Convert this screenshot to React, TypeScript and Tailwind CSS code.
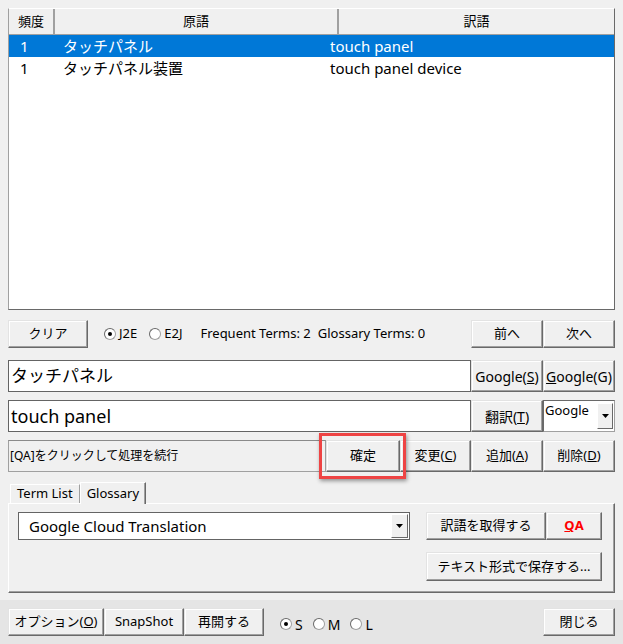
import type { ReactNode } from "react";

const font = { fontFamily: '"Noto Sans", "Noto Sans CJK JP", sans-serif' };

function Btn({
  children,
  className = "",
}: {
  children: ReactNode;
  className?: string;
}) {
  return (
    <button
      className={`flex items-center justify-center bg-[#f0f0f0] text-[13px] border border-t-[#e3e3e3] border-l-[#e3e3e3] border-b-[#696969] border-r-[#696969] shadow-[inset_-1px_-1px_0_#a0a0a0,inset_1px_1px_0_#ffffff] ${className}`}
    >
      {children}
    </button>
  );
}

function Radio({ checked, label }: { checked?: boolean; label: string }) {
  return (
    <div className="flex items-center gap-[3px]">
      <span className="w-[12px] h-[12px] rounded-full bg-white border border-[#a0a0a0] border-t-[#696969] border-l-[#696969] flex items-center justify-center">
        {checked && <span className="w-[4px] h-[4px] rounded-full bg-black" />}
      </span>
      <span>{label}</span>
    </div>
  );
}

function Arrow() {
  return (
    <svg width="7" height="4" viewBox="0 0 7 4">
      <path d="M0 0h7L3.5 4z" fill="#000" />
    </svg>
  );
}

const rows = [
  { freq: "1", src: "タッチパネル", dst: "touch panel", sel: true },
  { freq: "1", src: "タッチパネル装置", dst: "touch panel device", sel: false },
];

export default function App() {
  return (
    <div className="w-[623px] h-[644px] bg-[#f0f0f0] text-black flex flex-col overflow-hidden" style={font}>
      <div className="px-2 pt-2 flex flex-col">
        {/* term list */}
        <div className="h-[302px] bg-white border border-[#a0a0a0] border-t-white border-r-[#696969] border-b-[#696969] flex flex-col">
          <div className="flex h-[26px] text-[13px] border-b border-b-[#a0a0a0]">
            <div className="w-[46px] flex items-center justify-center bg-[#f0f0f0] border-r-2 border-r-[#a0a0a0]">頻度</div>
            <div className="w-[284px] flex items-center justify-center bg-[#f0f0f0] border-r-2 border-r-[#a0a0a0]">原語</div>
            <div className="flex-1 flex items-center justify-center bg-[#f0f0f0]">訳語</div>
          </div>
          {rows.map((r, i) => (
            <div
              key={i}
              className={`flex h-[22px] items-center text-[15px] ${r.sel ? "bg-[#0078d7] text-white" : "text-black"}`}
            >
              <div className="w-[54px] pl-[11px]">{r.freq}</div>
              <div className="w-[267px]">{r.src}</div>
              <div className="flex-1">{r.dst}</div>
            </div>
          ))}
        </div>

        {/* options row */}
        <div className="mt-[10px] flex h-[28px] items-center text-[13px]">
          <Btn className="w-[80px] h-[28px]">クリア</Btn>
          <div className="ml-[16px] flex items-center gap-[12px]">
            <Radio checked label="J2E" />
            <Radio label="E2J" />
          </div>
          <span className="ml-[18px]">Frequent Terms: 2</span>
          <span className="ml-[7px]">Glossary Terms: 0</span>
          <div className="ml-auto flex">
            <Btn className="w-[72px] h-[28px]">前へ</Btn>
            <Btn className="w-[72px] h-[28px]">次へ</Btn>
          </div>
        </div>

        {/* source */}
        <div className="mt-[12px] flex h-[32px]">
          <div className="flex-1 bg-white border border-[#646464] flex items-center pl-[2px] text-[17px]">タッチパネル</div>
          <Btn className="w-[72px] h-[32px] text-[14px]">
            Google(<u>S</u>)
          </Btn>
          <Btn className="w-[72px] h-[32px] text-[14px]">
            <u>G</u>oogle(G)
          </Btn>
        </div>

        {/* target */}
        <div className="mt-[8px] flex h-[32px]">
          <div className="flex-1 bg-white border border-[#646464] flex items-center pl-[2px] text-[18px]">touch panel</div>
          <Btn className="w-[72px] h-[32px] text-[14px]">
            翻訳(<u>T</u>)
          </Btn>
          <div className="w-[72px] h-[32px] bg-white border border-[#a0a0a0] border-t-[#696969] border-l-[#696969] flex">
            <span className="flex-1 text-[13px] leading-none pt-[3px] pl-[1px]">Google</span>
            <div className="w-[16px] my-[2px] mr-[1px] bg-[#f0f0f0] border border-t-white border-l-white border-b-[#696969] border-r-[#696969] flex items-center justify-center">
              <Arrow />
            </div>
          </div>
        </div>

        {/* status / actions */}
        <div className="mt-[8px] flex h-[32px]">
          <div className="flex-1 border border-[#a0a0a0] border-t-[#8a8a8a] flex items-center pl-[1px] text-[12px]">
            [QA]をクリックして処理を続行
          </div>
          <div className="relative w-[74px]">
            <Btn className="w-[74px] h-[32px] border-[#3c3c3c]">確定</Btn>
            <div className="absolute left-[-7px] top-[-7px] right-[-6px] bottom-[-7px] border-[3px] border-[#ee4444] shadow-[1px_2px_4px_rgba(0,0,0,0.4)] pointer-events-none" />
          </div>
          <Btn className="w-[71px] h-[32px]">
            変更(<u>C</u>)
          </Btn>
          <Btn className="w-[72px] h-[32px]">
            追加(<u>A</u>)
          </Btn>
          <Btn className="w-[72px] h-[32px]">
            削除(<u>D</u>)
          </Btn>
        </div>

        {/* tabs */}
        <div className="mt-[9px] flex items-end h-[22px] text-[13px] pl-[2px]">
          <div className="h-[19px] px-[6px] flex items-center border border-b-0 border-t-white border-l-white border-r-[#a0a0a0]">Term List</div>
          <div className="h-[22px] px-[6px] flex items-center border border-b-0 border-t-white border-l-white border-r-[#696969] shadow-[inset_-1px_0_0_#a0a0a0] -mb-px relative bg-[#f0f0f0]">Glossary</div>
        </div>
        <div className="h-[90px] border border-t-white border-l-white border-b-[#696969] border-r-[#696969] shadow-[inset_-1px_-1px_0_#a0a0a0] flex px-[9px] pt-[8px]">
          <div className="w-[392px] h-[28px] bg-white border border-[#646464] flex">
            <span className="flex-1 flex items-center pl-[10px] text-[15px]">Google Cloud Translation</span>
            <div className="w-[17px] my-px mr-px bg-[#f0f0f0] border border-t-white border-l-white border-b-[#696969] border-r-[#696969] flex items-center justify-center">
              <Arrow />
            </div>
          </div>
          <div className="ml-[16px] flex flex-col gap-[12px]">
            <div className="flex">
              <Btn className="w-[120px] h-[28px]">訳語を取得する</Btn>
              <Btn className="w-[56px] h-[28px] text-[#ff0000] font-bold">
                <u>Q</u>A
              </Btn>
            </div>
            <Btn className="w-[176px] h-[29px] border-[#1e1e1e]">テキスト形式で保存する...</Btn>
          </div>
        </div>
      </div>

      {/* bottom bar */}
      <div className="mt-auto h-[44px] bg-[#e5e5e5] flex items-start pt-[8px] px-2 text-[13px]">
        <Btn className="w-[96px] h-[28px]">
          オプション(<u>O</u>)
        </Btn>
        <Btn className="w-[80px] h-[28px]">SnapShot</Btn>
        <Btn className="w-[80px] h-[28px]">再開する</Btn>
        <div className="ml-[16px] h-[28px] flex items-center gap-[10px] pt-[4px] text-[14px]">
          <Radio checked label="S" />
          <Radio label="M" />
          <Radio label="L" />
        </div>
        <Btn className="ml-auto w-[72px] h-[28px]">閉じる</Btn>
      </div>
    </div>
  );
}
